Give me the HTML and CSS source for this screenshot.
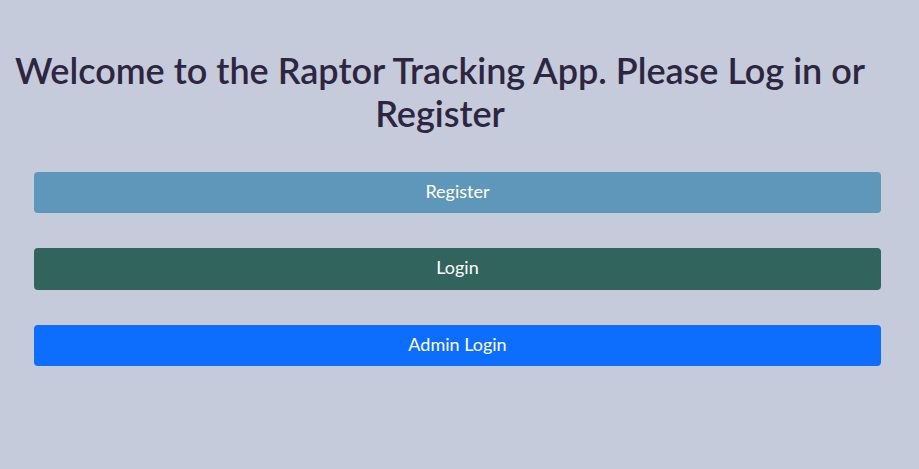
FILE: index.html
```html
<!DOCTYPE html>
<html lang="en">
<head>
<meta charset="utf-8">
<title>Raptor Tracking App</title>
<link rel="stylesheet" href="styles.css">
</head>
<body>
<main class="page">
  <h1 class="title">Welcome to the Raptor Tracking App. Please Log in or Register</h1>
  <div class="actions">
    <button class="btn btn-register">Register</button>
    <button class="btn btn-login">Login</button>
    <button class="btn btn-admin">Admin Login</button>
  </div>
</main>
</body>
</html>
```
FILE: styles.css
```css
html, body {
  margin: 0;
  padding: 0;
  background: #c5cbdb;
  height: 100%;
}
body {
  font-family: "Lato", "Open Sans", sans-serif;
  color: #2e2640;
}
.page {
  padding-top: 49px;
}
.title {
  width: 880px;
  margin: 0;
  text-align: center;
  font-size: 36px;
  line-height: 43px;
  font-weight: 600;
  color: #2e2640;
}
.actions {
  display: flex;
  flex-direction: column;
  gap: 35px;
  margin: 37px 38px 0 34px;
}
.btn {
  display: block;
  width: 100%;
  height: 41px;
  border: none;
  border-radius: 4px;
  font-family: inherit;
  font-size: 18px;
  color: #ffffff;
  padding: 0 0 4px;
  cursor: pointer;
}
.btn-register { background: #5f97bb; }
.btn-login { background: #31645c; height: 42px; }
.btn-admin { background: #0d6efd; }
```
